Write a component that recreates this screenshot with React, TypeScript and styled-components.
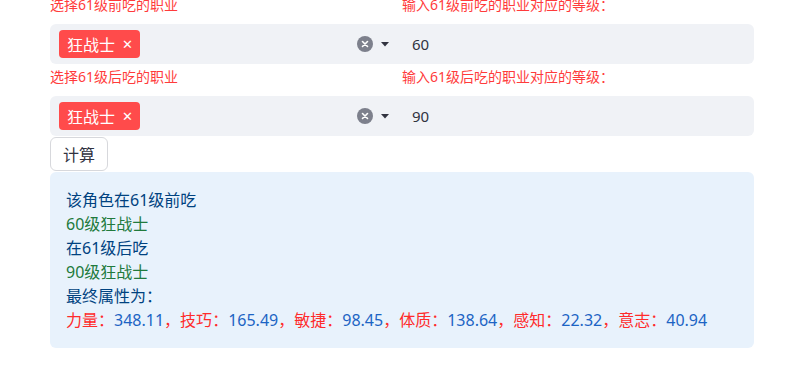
import React, { useState } from "react";
import styled, { createGlobalStyle } from "styled-components";

const GlobalStyle = createGlobalStyle`
  html, body {
    margin: 0;
    padding: 0;
    background: #ffffff;
    font-family: "Noto Sans", "Noto Sans CJK SC", sans-serif;
    color: #31333f;
  }
`;

const Page = styled.div`
  width: 704px;
  margin: -5px 0 0 50px;
  display: flex;
  flex-direction: column;
  gap: 1px;
`;

const Row = styled.div`
  display: grid;
  grid-template-columns: 352px 352px;

  & + & {
    margin-top: 2px;
  }
`;

const Field = styled.div`
  display: flex;
  flex-direction: column;
`;

const Label = styled.div`
  font-size: 14px;
  line-height: 20px;
  height: 20px;
  margin-bottom: 9px;
  color: #ff3b3b;
  white-space: nowrap;
`;

const SelectBox = styled.div`
  height: 40px;
  background: #f0f2f6;
  border-radius: 6px 0 0 6px;
  display: flex;
  align-items: center;
  padding: 0 9px;
  box-sizing: border-box;
`;

const Tag = styled.span`
  height: 28px;
  background: #ff4b4b;
  color: #ffffff;
  border-radius: 4px;
  display: inline-flex;
  align-items: center;
  padding: 0 7px 0 8px;
  font-size: 16px;
  gap: 7px;
`;

const TagClose = styled.span`
  font-size: 13px;
  line-height: 1;
`;

const Spacer = styled.div`
  flex: 1;
`;

const Controls = styled.div`
  display: flex;
  align-items: center;
  gap: 8px;
  margin-right: 4px;
`;

const NumberInput = styled.input`
  height: 40px;
  border: none;
  outline: none;
  background: #f0f2f6;
  border-radius: 0 6px 6px 0;
  padding: 0 10px;
  font-family: inherit;
  font-size: 15px;
  color: #31333f;
  box-sizing: border-box;
  width: 100%;
`;

const Button = styled.button`
  align-self: flex-start;
  height: 34px;
  padding: 0 12px;
  margin: 0;
  background: #ffffff;
  border: 1px solid #d7d8dc;
  border-radius: 6px;
  font-family: inherit;
  font-size: 16px;
  color: #31333f;
  cursor: pointer;
`;

const InfoBox = styled.div`
  background: #e8f2fc;
  border-radius: 6px;
  padding: 16px;
  color: #004280;
  font-size: 16px;
  line-height: 24px;
`;

const Line = styled.div<{ $tone?: "green" }>`
  color: ${(p) => (p.$tone === "green" ? "#217a3c" : "#004280")};
  white-space: nowrap;
`;

const Key = styled.span`
  color: #ff2b2b;
`;

const Val = styled.span`
  color: #1c64c4;
`;

const ClearIcon = () => (
  <svg width="16" height="16" viewBox="0 0 16 16">
    <circle cx="8" cy="8" r="8" fill="#7d808c" />
    <path d="M5.5 5.5 L10.5 10.5 M10.5 5.5 L5.5 10.5" stroke="#fff" strokeWidth="1.6" strokeLinecap="round" />
  </svg>
);

const Caret = () => (
  <svg width="8" height="5" viewBox="0 0 8 5">
    <path d="M0 0 L8 0 L4 4.5 Z" fill="#31333f" />
  </svg>
);

const stats: [string, string][] = [
  ["力量", "348.11"],
  ["技巧", "165.49"],
  ["敏捷", "98.45"],
  ["体质", "138.64"],
  ["感知", "22.32"],
  ["意志", "40.94"],
];

const SelectRow = ({ selectLabel, inputLabel, value }: { selectLabel: string; inputLabel: string; value: string }) => {
  const [v, setV] = useState(value);
  return (
    <Row>
      <Field>
        <Label>{selectLabel}</Label>
        <SelectBox>
          <Tag>
            狂战士<TagClose>✕</TagClose>
          </Tag>
          <Spacer />
          <Controls>
            <ClearIcon />
            <Caret />
          </Controls>
        </SelectBox>
      </Field>
      <Field>
        <Label>{inputLabel}</Label>
        <NumberInput value={v} onChange={(e) => setV(e.target.value)} />
      </Field>
    </Row>
  );
};

export default function App() {
  return (
    <>
      <GlobalStyle />
      <Page>
        <SelectRow selectLabel="选择61级前吃的职业" inputLabel="输入61级前吃的职业对应的等级：" value="60" />
        <SelectRow selectLabel="选择61级后吃的职业" inputLabel="输入61级后吃的职业对应的等级：" value="90" />
        <Button>计算</Button>
        <InfoBox>
          <Line>该角色在61级前吃</Line>
          <Line $tone="green">60级狂战士</Line>
          <Line>在61级后吃</Line>
          <Line $tone="green">90级狂战士</Line>
          <Line>最终属性为：</Line>
          <Line>
            {stats.map(([k, val], i) => (
              <React.Fragment key={k}>
                <Key>{k}：</Key>
                <Val>{val}</Val>
                {i < stats.length - 1 && <Key>，</Key>}
              </React.Fragment>
            ))}
          </Line>
        </InfoBox>
      </Page>
    </>
  );
}
